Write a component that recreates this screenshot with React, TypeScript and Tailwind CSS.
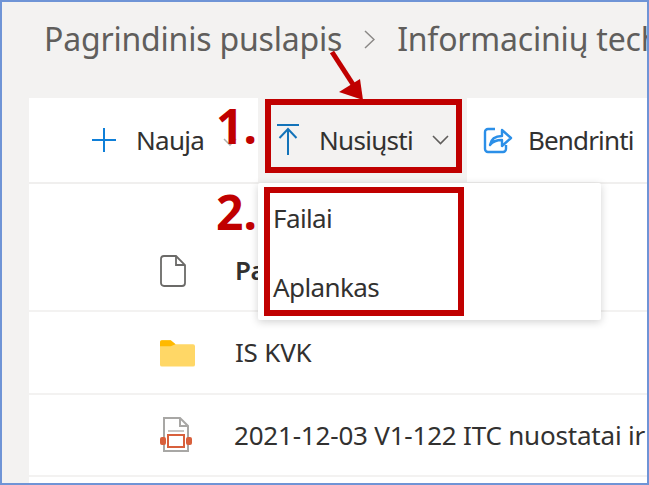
export default function App() {
  const font = { fontFamily: '"Noto Sans", sans-serif' };
  return (
    <div style={font} className="relative w-[649px] h-[485px] overflow-hidden border-2 border-[#6f94d6] bg-[#f3f2f1]">
      {/* breadcrumb */}
      <div className="flex items-center h-[96px] pl-[42px] pb-[22px] whitespace-nowrap text-[32px] text-[#605e5c] tracking-[-0.2px]">
        <span>Pagrindinis puslapis</span>
        <svg className="ml-[22px] mr-[22px] shrink-0" width="11" height="19" viewBox="0 0 11 19" fill="none" stroke="#8a8886" strokeWidth="1.5">
          <path d="M1 1l9 8.500L1 18" />
        </svg>
        <span>Informacinių tech</span>
      </div>

      {/* card */}
      <div className="ml-[27px] bg-white h-[400px]">
        <div className="flex h-[86px] border-b-2 border-[#f0efee] text-[26px] text-[#323130] tracking-[-0.7px]">
          <div className="flex items-center w-[229px] pl-[62px]">
            <svg width="26" height="26" viewBox="0 0 26 26" stroke="#0f7fd8" strokeWidth="2" fill="none">
              <path d="M13 1v24M1 13h24" />
            </svg>
            <span className="ml-[19px]">Nauja</span>
            <svg className="ml-[19px] mt-[4px]" width="14" height="8" viewBox="0 0 14 8" stroke="#b0aeac" strokeWidth="1.5" fill="none">
              <path d="M1 1l6 6 6-6" />
            </svg>
          </div>
          <div className="flex items-center w-[209px] bg-[#f3f2f1] pl-[19px]">
            <svg className="mb-[2px]" width="22" height="32" viewBox="0 0 22 32" stroke="#1373b9" strokeWidth="2" fill="none">
              <path d="M0 2h22M11 32V6M2.500 15L11 6l8.500 9" />
            </svg>
            <span className="ml-[20px]">Nusiųsti</span>
            <svg className="ml-[19px]" width="17" height="10" viewBox="0 0 17 10" stroke="#605e5c" strokeWidth="1.6" fill="none">
              <path d="M1 1l7.500 7.500L16 1" />
            </svg>
          </div>
          <div className="flex items-center pl-[16px]">
            <svg width="30" height="30" viewBox="0 0 30 30" fill="none" stroke="#2b8fe8" strokeWidth="2.4">
              <path d="M12 4H5a3 3 0 0 0-3 3v17a3 3 0 0 0 3 3h15a3 3 0 0 0 3-3v-4" />
              <path d="M7 20c1-6 5-9 12-9V5l9 8-9 8v-6c-5 0-9 1-12 5z" strokeLinejoin="round" />
            </svg>
            <span className="ml-[15px] tracking-[-0.85px]">Bendrinti</span>
          </div>
        </div>

        <div className="text-[26px] text-[#323130] tracking-[-0.6px] whitespace-nowrap">
          <div className="flex items-center h-[128px] pl-[131px] pt-[47px] border-b-2 border-[#f3f2f1]">
            <svg className="shrink-0" width="26" height="32" viewBox="0 0 26 32" fill="none" stroke="#6b6a68" strokeWidth="1.8">
              <path d="M4 1h12l9 9v18a3 3 0 0 1-3 3H4a3 3 0 0 1-3-3V4a3 3 0 0 1 3-3z" />
              <path d="M16 1v9h9" />
            </svg>
            <span className="ml-[49px] font-semibold">Pa</span>
          </div>
          <div className="flex items-center h-[83px] pl-[131px] border-b-2 border-[#f3f2f1]">
            <svg className="shrink-0" width="35" height="28" viewBox="0 0 36 28">
              <path d="M0 3a2 2 0 0 1 2-2h9l5 4h18a2 2 0 0 1 2 2v19a2 2 0 0 1-2 2H2a2 2 0 0 1-2-2z" fill="#ffd766" />
              <path d="M0 3a2 2 0 0 1 2-2h9l5 4-5 2H0z" fill="#ffb900" />
            </svg>
            <span className="ml-[40px] tracking-[-0.2px]">IS KVK</span>
          </div>
          <div className="flex items-center h-[82px] pl-[131px] border-b-2 border-[#f3f2f1]">
            <svg className="shrink-0" width="32" height="36" viewBox="0 0 32 36" fill="none">
              <path d="M4 1h16l8 8v25H4z" fill="#fff" stroke="#a8a7a5" strokeWidth="2" />
              <path d="M20 1v8h8" stroke="#a8a7a5" strokeWidth="2" />
              <path d="M8 14h16" stroke="#c8c6c4" strokeWidth="2" />
              <rect x="8" y="18" width="16" height="12" fill="#fff" stroke="#d8603c" strokeWidth="2" />
              <rect x="0" y="20" width="6" height="8" rx="2" fill="#d8603c" />
              <rect x="26" y="20" width="6" height="8" rx="2" fill="#d8603c" />
            </svg>
            <span className="ml-[42px] tracking-[-0.2px]">2021-12-03 V1-122 ITC nuostatai ir</span>
          </div>
        </div>
      </div>

      {/* dropdown */}
      <div className="absolute left-[256px] top-[181px] w-[343px] h-[137px] rounded-[2px] bg-white shadow-[0_2px_8px_rgba(0,0,0,0.18)] text-[26px] text-[#323130] tracking-[-0.6px]">
        <div className="pl-[15px] pt-[16px] h-[69px]">Failai</div>
        <div className="pl-[15px] pt-[16px]">Aplankas</div>
      </div>

      {/* annotations */}
      <div className="absolute left-[263px] top-[97px] w-[197px] h-[74px] border-[6px] border-[#c00000]" />
      <div className="absolute left-[262px] top-[185px] w-[200px] h-[129px] border-[6px] border-[#c00000]" />
      <span className="absolute left-[214px] top-[94px] text-[48px] leading-[60px] font-bold text-[#c00000]">1.</span>
      <span className="absolute left-[214px] top-[180px] text-[48px] leading-[60px] font-bold text-[#c00000]">2.</span>
      <svg className="absolute left-[325px] top-[48px]" width="40" height="54" viewBox="0 0 40 54" fill="#c00000">
        <path d="M5 2l24 37" stroke="#c00000" strokeWidth="5" fill="none" />
        <path d="M36 50L12 42l21-13z" />
      </svg>
    </div>
  );
}
